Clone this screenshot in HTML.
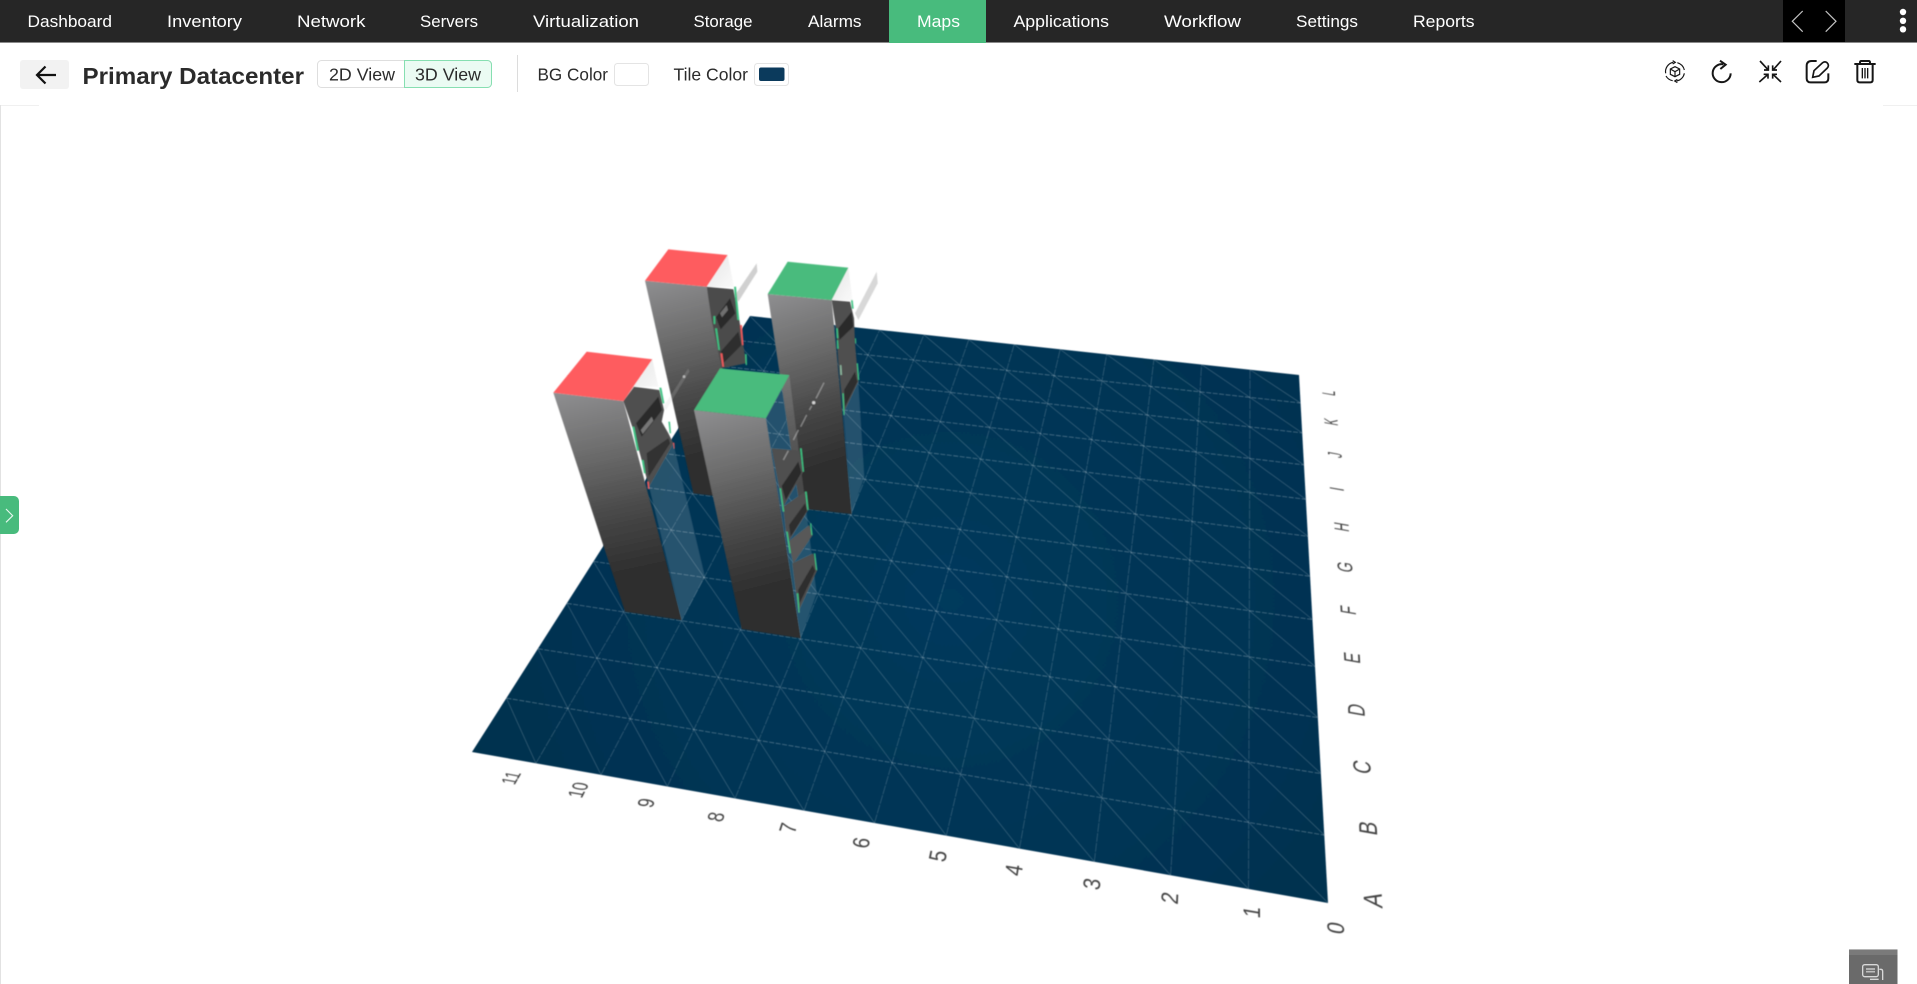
<!DOCTYPE html>
<html lang="en">
<head>
<meta charset="utf-8">
<title>Primary Datacenter</title>
<style>
html,body{margin:0;padding:0;background:#fff;width:1917px;height:984px;overflow:hidden}
svg{display:block;position:absolute;left:0;top:0}
text{font-family:"Liberation Sans",sans-serif}
.nav text{fill:#fff;font-size:17px}
.hd text{fill:#2b2b2b;font-size:17.500px}
.lb text{fill:#444;font-size:18px;text-anchor:middle;dominant-baseline:central}
</style>
</head>
<body>
<svg id="s" width="1917" height="984" viewBox="0 0 1917 984" xmlns="http://www.w3.org/2000/svg">
<defs>
<linearGradient id="f" x1="0" y1="0" x2=".12" y2="1">
<stop offset="0" stop-color="#8f8f91"/><stop offset=".3" stop-color="#6c6c6c"/><stop offset=".6" stop-color="#464646"/><stop offset=".85" stop-color="#2e2e2e"/><stop offset="1" stop-color="#2d2d2d"/>
</linearGradient>
<radialGradient id="pl" gradientUnits="userSpaceOnUse" cx="950" cy="600" r="520">
<stop offset="0" stop-color="#023a5c"/><stop offset="1" stop-color="#03304e"/>
</radialGradient>
<linearGradient id="wh" x1="0" y1="0" x2="1" y2="1">
<stop offset="0" stop-color="#e6e6e6"/><stop offset="1" stop-color="#fafafa"/>
</linearGradient>
<filter id="b1" x="-5%" y="-5%" width="110%" height="110%"><feGaussianBlur stdDeviation="1.6"/></filter>
<filter id="b2" x="-20%" y="-20%" width="140%" height="140%"><feGaussianBlur stdDeviation=".5"/></filter>
</defs>

<!-- nav -->
<rect x="0" y="0" width="1917" height="42" fill="#262626"/>
<rect x="0" y="42" width="1917" height="1" fill="#8a8a8a"/>
<rect x="889" y="0" width="97" height="43" fill="#48bb7d"/>
<g class="nav">
<text x="27.500" y="27" textLength="84.500" lengthAdjust="spacingAndGlyphs">Dashboard</text>
<text x="167" y="27" textLength="75" lengthAdjust="spacingAndGlyphs">Inventory</text>
<text x="297" y="27" textLength="68.500" lengthAdjust="spacingAndGlyphs">Network</text>
<text x="420" y="27" textLength="58" lengthAdjust="spacingAndGlyphs">Servers</text>
<text x="533" y="27" textLength="106" lengthAdjust="spacingAndGlyphs">Virtualization</text>
<text x="693.500" y="27" textLength="59" lengthAdjust="spacingAndGlyphs">Storage</text>
<text x="808" y="27" textLength="53.500" lengthAdjust="spacingAndGlyphs">Alarms</text>
<text x="917" y="27" textLength="43" lengthAdjust="spacingAndGlyphs">Maps</text>
<text x="1013.500" y="27" textLength="95.500" lengthAdjust="spacingAndGlyphs">Applications</text>
<text x="1164" y="27" textLength="77" lengthAdjust="spacingAndGlyphs">Workflow</text>
<text x="1296" y="27" textLength="62" lengthAdjust="spacingAndGlyphs">Settings</text>
<text x="1413" y="27" textLength="61.500" lengthAdjust="spacingAndGlyphs">Reports</text>
</g>
<rect x="1783" y="0" width="62" height="42" fill="#000"/>
<path d="M1802.700 11 1792.300 21.300 1802.700 31.700M1825.700 11 1836 21.300 1825.700 31.700" fill="none" stroke="#c4c4c4" stroke-width="1.200"/>
<circle cx="1903" cy="12" r="3.200" fill="#fff"/><circle cx="1903" cy="20.800" r="3.200" fill="#fff"/><circle cx="1903" cy="29.300" r="3.200" fill="#fff"/>

<!-- toolbar -->
<rect x="20" y="60" width="49" height="29" rx="3" fill="#f2f2f2"/>
<path d="M56 75H37M45.500 66.500 37 75l8.500 8.500" fill="none" stroke="#111" stroke-width="2.200"/>
<text x="82.500" y="84" font-size="23.500" font-weight="700" fill="#2b2b2b" textLength="221.500" lengthAdjust="spacingAndGlyphs">Primary Datacenter</text>
<rect x="317.500" y="60.500" width="174" height="27" rx="4" fill="#fff" stroke="#dedede"/>
<path d="M404.500 60.500H487.500a4 4 0 0 1 4 4v19a4 4 0 0 1-4 4H404.500Z" fill="#ebfbf3" stroke="#86dfb1"/>
<g class="hd">
<text x="329" y="80.500" textLength="66" lengthAdjust="spacingAndGlyphs">2D View</text>
<text x="415" y="80.500" textLength="66" lengthAdjust="spacingAndGlyphs">3D View</text>
<text x="537.500" y="80.500" textLength="70.500" lengthAdjust="spacingAndGlyphs" fill="#444">BG Color</text>
<text x="673.500" y="80.500" textLength="74.500" lengthAdjust="spacingAndGlyphs" fill="#444">Tile Color</text>
</g>
<rect x="517" y="55" width="1" height="37" fill="#dcdcdc"/>
<rect x="614.500" y="63.500" width="34" height="22" rx="3" fill="#fff" stroke="#e4e4e4"/>
<rect x="754.500" y="63.500" width="34" height="22" rx="3" fill="#fff" stroke="#e4e4e4"/>
<rect x="759" y="67.500" width="25.500" height="13.500" rx="2" fill="#0b3a5c"/>

<!-- toolbar icons -->
<g transform="translate(1640 40) scale(.33333)" fill="none" stroke="#161616" stroke-width="6">
<g stroke-width="3.500">
<path d="M77 100A28.500 28.500 0 0 1 100 67M112 68A28.500 28.500 0 0 1 133 90M133 100A28.500 28.500 0 0 1 110 123M98 122A28.500 28.500 0 0 1 78 108"/>
<path d="M98 62 106 67 98 72M112 118 104 123 112 128"/>
<path d="M105 80 119 87V103L105 110 91 103V87ZM91 87 105 95 119 87M105 95V110"/>
</g>
<path d="M272 100A27 27 0 1 1 250 73"/>
<path d="M240 62 257 74 241 87"/>
<path d="M360 63 384 89M372 90H385V76M423 63 400 89M411 90H398V76M358 126 383 104M371 103H384V116M423 126 400 104M411 103H398V116" stroke-width="5"/>
<path d="M530 63H515Q500 63 500 78V115Q500 127 512 127H553Q565 127 565 115V100"/>
<path d="M518 112 522 92 548 68Q555 63 561 68L564 72Q567 78 562 84L537 108Z" stroke-width="5"/>
<path d="M643 72H707M660 72V67Q660 63 664 63H686Q690 63 690 67V72M652 72V120Q652 127 659 127H691Q698 127 698 120V72"/>
<path d="M667 84V115M675 84V115M683 84V115" stroke-width="4"/>
</g>

<!-- faint page borders -->
<rect x="0" y="105" width="39" height="1" fill="#f0f0f0"/>
<rect x="1883" y="105" width="34" height="1" fill="#f0f0f0"/>
<rect x="0" y="105" width="1" height="879" fill="#e2e2e2"/>

<!-- floor plane -->
<polygon points="750,316 1299,375 1328,903 472,752" fill="url(#pl)" filter="url(#b2)"/>
<g id="grid" fill="none" stroke="#fff" stroke-width=".8" filter="url(#b2)"></g>

<!-- axis labels -->
<g class="lb" filter="url(#b2)">
<text transform="matrix(-.063 -1.15 1.33 .23 1336 928)">0</text>
<text transform="matrix(-.006 -1.135 1.33 .23 1252 912)">1</text>
<text transform="matrix(.052 -1.12 1.33 .23 1170 898)">2</text>
<text transform="matrix(.109 -1.104 1.33 .23 1092 884)">3</text>
<text transform="matrix(.167 -1.089 1.33 .23 1014 870)">4</text>
<text transform="matrix(.224 -1.073 1.33 .23 938 856)">5</text>
<text transform="matrix(.27 -1.012 1.28 .22 862 843)">6</text>
<text transform="matrix(.31 -.952 1.28 .22 789 828)">7</text>
<text transform="matrix(.345 -.893 1.23 .21 717 817)">8</text>
<text transform="matrix(.375 -.836 1.23 .21 647 803)">9</text>
<text transform="matrix(.378 -.737 1.18 .2 578 790)">10</text>
<text transform="matrix(.371 -.64 1.13 .2 511 778)">11</text>
<text transform="matrix(-.066 -1.2 1.48 .26 1374 900)">A</text>
<text transform="matrix(-.062 -1.12 1.43 .25 1368 828)">B</text>
<text transform="matrix(-.055 -1 1.38 .24 1362 767)">C</text>
<text transform="matrix(-.051 -.92 1.33 .23 1357 710)">D</text>
<text transform="matrix(-.047 -.85 1.28 .22 1353 658)">E</text>
<text transform="matrix(-.041 -.75 1.23 .21 1348 610)">F</text>
<text transform="matrix(-.04 -.72 1.18 .2 1345 567)">G</text>
<text transform="matrix(-.036 -.65 1.16 .2 1342 527)">H</text>
<text transform="matrix(-.034 -.62 1.13 .2 1337 489)">I</text>
<text transform="matrix(-.03 -.55 1.1 .19 1336 455)">J</text>
<text transform="matrix(-.029 -.52 1.08 .19 1332 422)">K</text>
<text transform="matrix(-.028 -.5 1.03 .18 1330 393)">L</text>
</g>

<!-- racks -->
<g transform="translate(530 230) scale(.33333)" filter="url(#b1)">
<!-- rack A (back red) -->
<polygon points="615,195 680,100 682,125 625,215" fill="#d0d0d0"/>
<polygon points="530,170 593,75 612,172" fill="url(#wh)"/>
<polygon points="345,152 530,170 652,810 490,790" fill="url(#f)"/>
<polygon points="530,170 610,178 628,270 640,345 648,400 575,415 545,270" fill="#4b4b4b"/>
<polygon points="558,262 600,205 616,250 572,298" fill="#2b2b2b"/>
<polygon points="572,365 625,305 634,345 582,398" fill="#2e2e2e"/>
<polygon points="570,250 590,225 594,240 576,262" fill="#707070"/>
<polygon points="612,170 618,170 628,270 622,270" fill="#3ec283"/>
<polygon points="550,258 556,258 556,282 551,282" fill="#3ec283"/>
<polygon points="555,295 561,295 570,360 565,360" fill="#3ec283"/>
<polygon points="645,372 650,372 651,405 647,405" fill="#3ec283"/>
<polygon points="630,285 636,285 641,345 636,345" fill="#f25a5c"/>
<polygon points="571,370 577,370 582,410 577,410" fill="#f25a5c"/>
<polygon points="345,152 415,58 593,75 530,170" fill="#fe5c5e"/>
<polygon points="400,530 475,415 478,425 408,540" fill="#c8c8c8" opacity=".2"/>
<circle cx="462" cy="440" r="4" fill="#ddd" opacity=".7"/>

<!-- rack B (back green) -->
<polygon points="975,250 1040,125 1043,160 985,270" fill="#d8d8d8"/>
<polygon points="905,210 955,113 968,212" fill="url(#wh)"/>
<polygon points="713,192 905,210 965,852 810,835" fill="url(#f)"/>
<polygon points="940,550 985,455 1003,740 965,852" fill="#fff" fill-opacity=".14"/>
<polygon points="905,210 960,215 972,265 975,340 985,455 940,550 925,400 918,295" fill="#505050"/>
<polygon points="925,295 965,245 970,290 928,330" fill="#2c2c2c"/>
<polygon points="942,480 975,425 982,455 945,530" fill="#2e2e2e"/>
<polygon points="963,210 968,210 971,236 966,236" fill="#3ec283"/>
<polygon points="918,295 923,295 925,325 920,325" fill="#3ec283"/>
<polygon points="920,330 924,330 926,356 921,356" fill="#3ec283"/>
<polygon points="930,405 934,405 936,435 931,435" fill="#8fbca2"/>
<polygon points="980,400 984,400 988,450 984,450" fill="#3ec283"/>
<polygon points="937,490 941,490 944,555 940,555" fill="#3ec283"/>
<polygon points="975,325 978,325 979,340 976,340" fill="#3ec283"/>
<polygon points="713,192 773,95 955,113 905,210" fill="#48bb7d"/>

<!-- rack C (front red) -->
<polygon points="357,770 430,640 525,1040 455,1170" fill="#fff" fill-opacity=".15"/>
<polygon points="280,513 367,388 385,470 312,470" fill="url(#wh)"/>
<polygon points="70,488 280,513 455,1170 285,1145" fill="url(#f)"/>
<polygon points="280,513 312,470 388,480 402,540 395,575 415,610 430,640 357,770 310,600" fill="#4f4f4f"/>
<polygon points="318,580 385,500 396,540 335,620" fill="#2b2b2b"/>
<polygon points="332,600 365,560 370,572 338,612" fill="#777"/>
<polygon points="350,670 415,625 420,640 356,740" fill="#333"/>
<polygon points="388,473 394,473 403,520 398,520" fill="#3ec283"/>
<polygon points="307,590 313,590 327,662 321,662" fill="#3ec283"/>
<polygon points="335,690 341,690 347,730 342,730" fill="#3ec283"/>
<polygon points="415,575 420,575 423,610 419,610" fill="#3ec283"/>
<polygon points="351,755 356,755 359,777 354,777" fill="#f25a5c"/>
<polygon points="429,638 433,638 434,656 431,656" fill="#f25a5c"/>
<polygon points="70,488 170,365 367,388 280,513" fill="#fe5c5e"/>

<!-- rack D (front green) -->
<polygon points="708,565 778,435 860,1090 812,1225" fill="#fff" fill-opacity=".14"/>
<polygon points="492,540 708,565 812,1225 635,1197" fill="url(#f)"/>
<polygon points="725,655 808,662 820,725 760,830 748,775" fill="#505050"/>
<polygon points="760,830 825,785 835,840 775,935 768,905" fill="#505050"/>
<polygon points="775,935 838,885 848,915 790,1000" fill="#585858"/>
<polygon points="787,1000 850,970 862,1020 805,1145" fill="#505050"/>
<polygon points="755,768 805,695 814,728 767,810" fill="#2a2a2a"/>
<polygon points="777,885 825,820 831,842 782,920" fill="#2e2e2e"/>
<polygon points="804,1080 848,1005 856,1022 809,1120" fill="#2e2e2e"/>
<polygon points="748,775 753,775 763,845 758,845" fill="#3ec283"/>
<polygon points="768,905 773,905 783,970 778,970" fill="#3ec283"/>
<polygon points="800,1090 805,1090 809,1148 805,1148" fill="#3ec283"/>
<polygon points="810,655 815,655 822,725 818,725" fill="#3ec283"/>
<polygon points="825,785 830,785 836,840 832,840" fill="#3ec283"/>
<polygon points="840,880 844,880 848,915 844,915" fill="#3ec283"/>
<polygon points="852,970 856,970 862,1020 858,1020" fill="#3ec283"/>
<path d="M760 690 775 662M790 630 805 600M812 590 830 555M838 540 845 528M858 505 882 458" stroke="#dcdcdc" stroke-width="4" opacity=".45" fill="none"/>
<circle cx="851" cy="518" r="5" fill="#eee" opacity=".85"/>
<polygon points="492,540 570,415 778,435 708,565" fill="#48bb7d"/>
</g>

<!-- side tab -->
<path d="M0 496H14a5 5 0 0 1 5 5V529a5 5 0 0 1-5 5H0Z" fill="#48bb7d"/>
<path d="M6 509 12.700 515.700 6 522.300" fill="none" stroke="#e8f7ef" stroke-width="1.100"/>

<!-- chat -->
<rect x="1849" y="949" width="48.500" height="35" fill="#6a6a6a"/>
<rect x="1849" y="949" width="48.500" height="6" fill="#7a7a7a"/>
<rect x="1849" y="949" width="48.500" height="1" fill="#b5b5b5"/>
<g transform="translate(1820 930) scale(.33333)" fill="none" stroke="#d8d8d8" stroke-width="4">
<rect x="128" y="104" width="47" height="36" rx="6"/>
<path d="M138 117H165M138 125H165" stroke-width="5" stroke="#bdbdbd"/>
<path d="M178 118H182Q188 118 188 124V150M150 148H176"/>
</g>
</svg>
<script>
(function(){
var g=.12666,h=.62333,a=-796.22,b=780.7,c=1328,d=-55.75,e=-294.25,f=903;
function P(u,v){var w=g*u+h*v+1;return[((a*u+b*v+c)/w).toFixed(1),((d*u+e*v+f)/w).toFixed(1)];}
var G=document.getElementById('grid'),N='http://www.w3.org/2000/svg';
function L(p,q,op,dash){var l=document.createElementNS(N,'line');
l.setAttribute('x1',p[0]);l.setAttribute('y1',p[1]);l.setAttribute('x2',q[0]);l.setAttribute('y2',q[1]);
l.setAttribute('stroke-opacity',op);if(dash)l.setAttribute('stroke-dasharray',dash);G.appendChild(l);}
for(var i=1;i<12;i++){
 L(P(1,i/12),P(0,i/12),.3,'5 1.5');
 L(P(i/12,0),P(i/12,1),.2,'9 1');
}
for(var r=0;r<12;r++)for(var k=0;k<12;k++){L(P((k+1)/12,(r+1)/12),P(k/12,r/12),.2);}
})();
</script>
</body>
</html>
